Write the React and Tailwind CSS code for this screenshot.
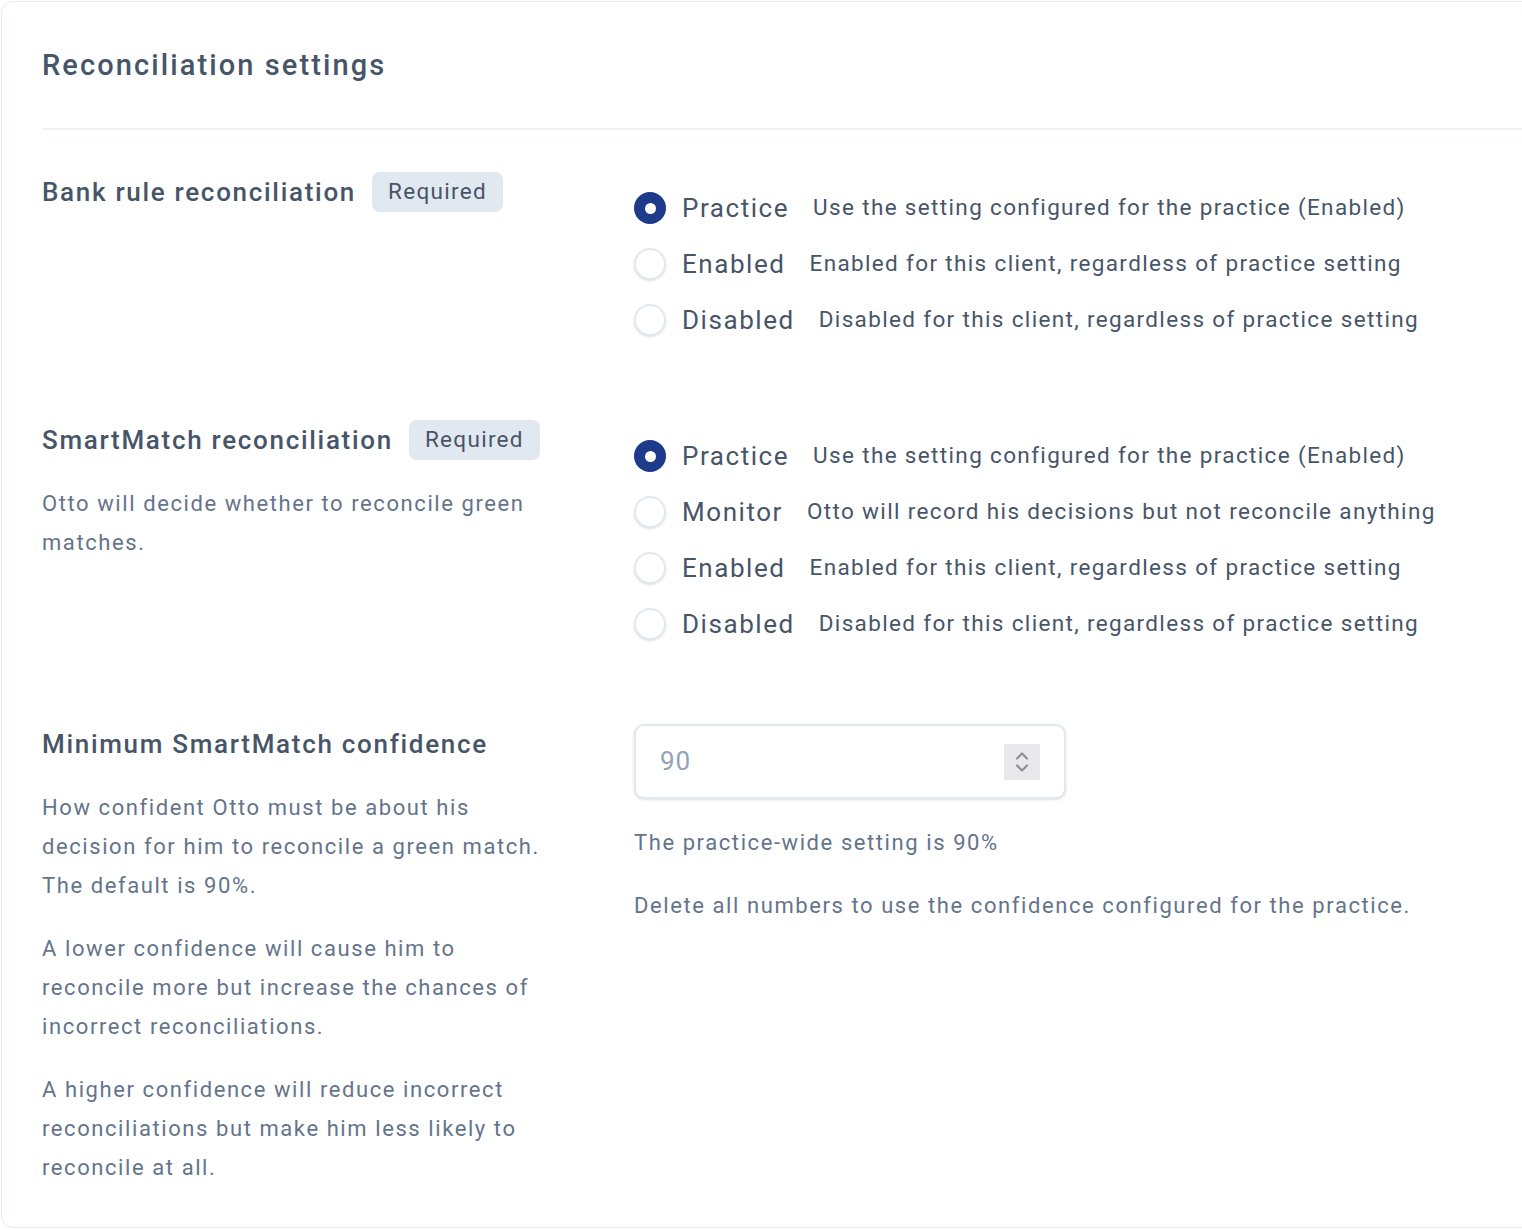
import React from 'react';

const font = { fontFamily: 'Roboto, "Noto Sans", sans-serif' };

function Radio({ checked, label, desc }) {
  return (
    <div className="flex h-14 items-center">
      {checked ? (
        <span className="flex h-8 w-8 shrink-0 items-center justify-center rounded-full bg-[#1e3a8a]">
          <span className="h-[11px] w-[11px] rounded-full bg-white" />
        </span>
      ) : (
        <span className="h-8 w-8 shrink-0 rounded-full border-2 border-[#e2e8f0] bg-white shadow-sm" />
      )}
      <span className="ml-4 text-[26px] tracking-[1.55px] text-[#475569]">{label}</span>
      <span className="ml-6 text-[22.5px] tracking-[1.35px] text-[#475569]">{desc}</span>
    </div>
  );
}

function Heading({ children, required }) {
  return (
    <div className="flex h-10 items-center gap-4">
      <h3 className="text-[26px] font-medium tracking-[1.7px] text-[#475569]">{children}</h3>
      {required && (
        <span className="flex h-10 items-center rounded-lg bg-[#e2e8f0] px-4 text-[22.5px] tracking-[1.3px] text-[#475569]">
          Required
        </span>
      )}
    </div>
  );
}

const practiceOpt = { label: 'Practice', desc: 'Use the setting configured for the practice (Enabled)', checked: true };
const monitorOpt = { label: 'Monitor', desc: 'Otto will record his decisions but not reconcile anything' };
const enabledOpt = { label: 'Enabled', desc: 'Enabled for this client, regardless of practice setting' };
const disabledOpt = { label: 'Disabled', desc: 'Disabled for this client, regardless of practice setting' };

const body = 'text-[22px] leading-[39px] tracking-[1.58px] text-[#64748b]';

export default function App() {
  return (
    <div className="h-[1230px] w-full overflow-hidden bg-white" style={font}>
      <div className="ml-px mt-px w-[1580px] rounded-xl border border-[#e8edf2] bg-white pb-10 pl-10">
        {/* header */}
        <div className="flex h-[128px] items-center border-b-2 border-[#eef1f5] pt-[2px]">
          <h2 className="text-[29px] font-medium tracking-[2.1px] text-[#475569]">Reconciliation settings</h2>
        </div>

        <div className="flex flex-col gap-[72px] pt-[42px]">
          {/* bank rule */}
          <div className="grid grid-cols-[512px_1fr] gap-x-20">
            <Heading required>Bank rule reconciliation</Heading>
            <div className="pt-2">
              {[practiceOpt, enabledOpt, disabledOpt].map((o) => (
                <Radio key={o.label} {...o} />
              ))}
            </div>
          </div>

          {/* smartmatch */}
          <div className="grid grid-cols-[512px_1fr] gap-x-20">
            <div>
              <Heading required>SmartMatch reconciliation</Heading>
              <p className={`mt-6 ${body}`}>Otto will decide whether to reconcile green matches.</p>
            </div>
            <div className="pt-2">
              {[practiceOpt, monitorOpt, enabledOpt, disabledOpt].map((o) => (
                <Radio key={o.label} {...o} />
              ))}
            </div>
          </div>

          {/* confidence */}
          <div className="grid grid-cols-[512px_1fr] gap-x-20">
            <div>
              <Heading>Minimum SmartMatch confidence</Heading>
              <div className={`mt-6 space-y-6 ${body}`}>
                <p>How confident Otto must be about his decision for him to reconcile a green match. The default is 90%.</p>
                <p>A lower confidence will cause him to reconcile more but increase the chances of incorrect reconciliations.</p>
                <p>A higher confidence will reduce incorrect reconciliations but make him less likely to reconcile at all.</p>
              </div>
            </div>
            <div>
              <div className="flex h-[75px] w-[432px] items-center justify-between rounded-[10px] border-2 border-[#e2e8f0] bg-white pl-6 pr-6 shadow-sm">
                <span className="text-[26px] tracking-[1px] text-[#94a3b8]">90</span>
                <span className="flex h-9 w-9 items-center justify-center bg-[#e8e8ed]">
                  <svg width="18" height="26" viewBox="0 0 18 26" fill="none" stroke="#8e8e93" strokeWidth="2.2" strokeLinecap="round" strokeLinejoin="round">
                    <path d="M4 9.5 9 4.5l5 5" />
                    <path d="M4 16.5l5 5 5-5" />
                  </svg>
                </span>
              </div>
              <p className={`mt-6 ${body}`}>The practice-wide setting is 90%</p>
              <p className={`mt-6 ${body}`}>Delete all numbers to use the confidence configured for the practice.</p>
            </div>
          </div>
        </div>
      </div>
    </div>
  );
}
